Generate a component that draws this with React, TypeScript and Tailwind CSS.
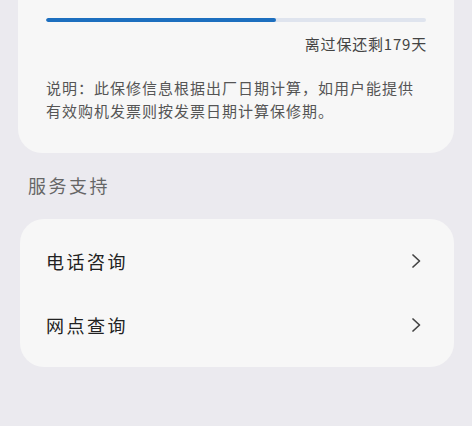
import React from "react"

const font = { fontFamily: '"Noto Sans CJK SC", "Noto Sans", sans-serif' }

function Chevron() {
  return (
    <svg width="12" height="16" viewBox="0 0 12 16" fill="none">
      <path d="M3 2 L9.5 8 L3 14" stroke="#444" strokeWidth="1.7" strokeLinecap="round" strokeLinejoin="round" />
    </svg>
  )
}

function ServiceRow({ label }: { label: string }) {
  return (
    <div className="flex items-center justify-between h-[64px] pl-[26px] pr-[32px]">
      <span className="text-[18px] tracking-[2.5px] text-[#222]">{label}</span>
      <Chevron />
    </div>
  )
}

export default function App() {
  const used = 231 / 381

  return (
    <div className="w-[472px] h-[426px] bg-[#ebeaef] overflow-hidden" style={font}>
      <div className="mx-[18px] bg-[#f7f7f7] rounded-b-[24px] pt-[18px] pb-[31px] px-[28px]">
        <div className="h-[4px] bg-[#dfe4ee] rounded-full overflow-hidden">
          <div className="h-full bg-[#1d6fbf] rounded-full" style={{ width: `${used * 100}%` }} />
        </div>
        <div className="text-right text-[15px] tracking-[0.8px] -mr-[1px] text-[#444] mt-[12px] leading-[20px]">离过保还剩179天</div>
        <p className="mt-[22px] text-[15px] tracking-[1px] leading-[23px] text-[#555]">
          说明：此保修信息根据出厂日期计算，如用户能提供有效购机发票则按发票日期计算保修期。
        </p>
      </div>

      <div className="px-[28px] pt-[20px] pb-[22px] text-[18px] tracking-[2.5px] leading-[24px] text-[#666]">服务支持</div>

      <div className="ml-[20px] mr-[18px] bg-[#f7f7f7] rounded-[24px] py-[10px]">
        <ServiceRow label="电话咨询" />
        <ServiceRow label="网点查询" />
      </div>
    </div>
  )
}
